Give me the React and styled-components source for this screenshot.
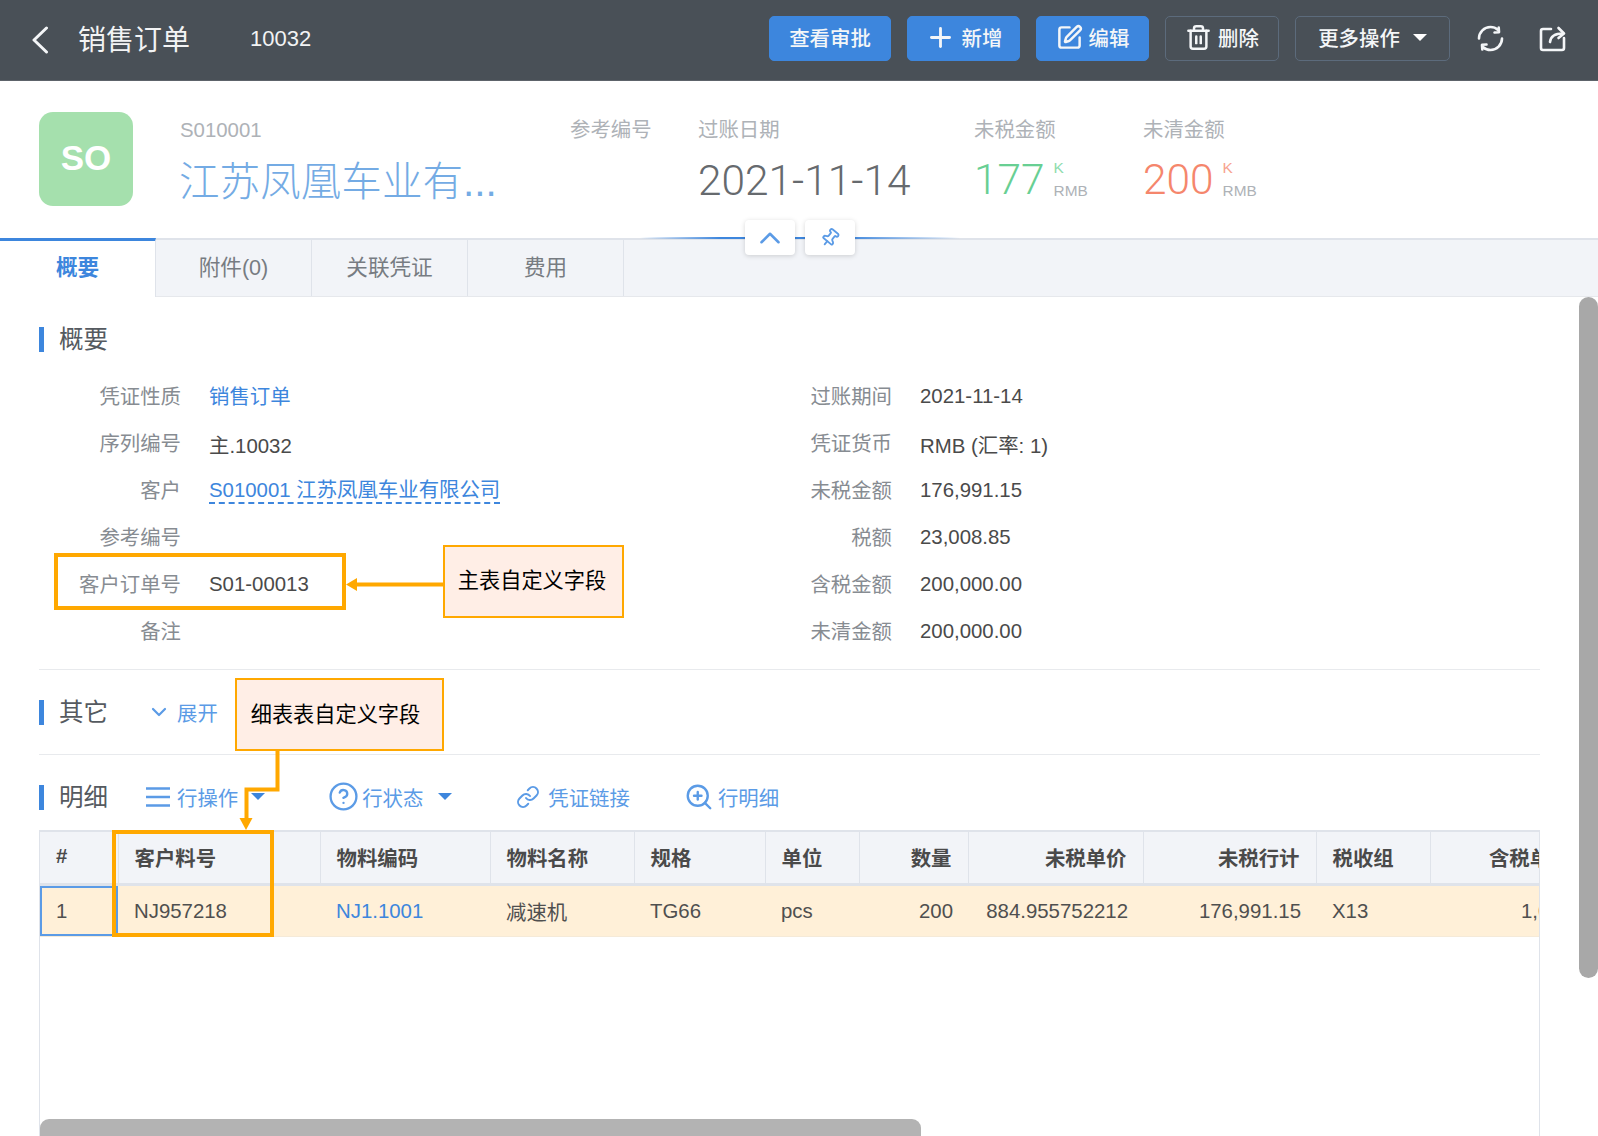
import React from "react";
import styled, { createGlobalStyle } from "styled-components";
import { ChevronUp, ChevronDown, Plus, SquarePen, Trash2, Pin, CircleHelp, Link, ZoomIn } from "lucide-react";

const Global = createGlobalStyle`
  html, body { margin: 0; padding: 0; background: #fff; overflow: hidden; }
  * { box-sizing: border-box; }
  body { font-family: "Liberation Sans", "Noto Sans CJK SC", sans-serif; }
`;

const Page = styled.div`
  position: relative;
  width: 1598px;
  height: 1136px;
  overflow: hidden;
  display: flex;
  flex-direction: column;
`;

/* ---------- top bar ---------- */
const TopBar = styled.header`
  flex: none;
  height: 81px;
  background: #495057;
  border-bottom: 1px solid #5d636a;
  display: flex;
  align-items: center;
  padding: 0 32px 4px 31px;
  color: #fff;
`;
const BackBtn = styled.span`
  display: flex;
  width: 47px;
  margin-top: 4px;
  color: #f4f6f8;
`;
const PageTitle = styled.span`
  font-size: 28px;
  width: 172px;
  color: #f2f3f4;
`;
const DocNo = styled.span`
  font-size: 22px;
  color: #f2f3f4;
  margin-top: 2px;
`;
const Actions = styled.div`
  margin-left: auto;
  display: flex;
  align-items: center;
  gap: 16px;
`;
const ActionBtn = styled.button`
  height: 45px;
  width: ${(p) => p.$w}px;
  display: flex;
  align-items: center;
  justify-content: center;
  gap: 6px;
  padding: 0 0 2px;
  font: inherit;
  font-size: 20.4px;
  font-weight: 500;
  color: #f4f6f8;
  border-radius: 5px;
  background: ${(p) => (p.$primary ? "#3d86dd" : "transparent")};
  border: 1.5px solid ${(p) => (p.$primary ? "#3d86dd" : "#5c6b7c")};
`;
const Caret = styled.span`
  width: 0;
  height: 0;
  margin-left: ${(p) => p.$ml || 8}px;
  border-left: ${(p) => p.$size || 7}px solid transparent;
  border-right: ${(p) => p.$size || 7}px solid transparent;
  border-top: ${(p) => p.$size || 7}px solid ${(p) => p.$color || "#fff"};
`;
const IconBtns = styled.div`
  display: flex;
  align-items: center;
  gap: 33px;
  margin-left: 26px;
  color: #f4f6f8;
`;

/* ---------- summary ---------- */
const Summary = styled.section`
  flex: none;
  height: 157px;
  padding: 31px 0 0 39px;
  display: flex;
  align-items: flex-start;
`;
const Avatar = styled.div`
  width: 94px;
  height: 94px;
  margin-right: 47px;
  border-radius: 14px;
  background: #a5e0ad;
  color: #fff;
  font-size: 35px;
  font-weight: 700;
  display: flex;
  align-items: center;
  justify-content: center;
  padding-bottom: 2px;
`;
const Stat = styled.div`
  width: ${(p) => p.$w}px;
  flex: none;
`;
const StatLabel = styled.div`
  height: 36px;
  line-height: 36px;
  font-size: 20.4px;
  color: #aeb2b7;
`;
const StatRow = styled.div`
  height: 66px;
  display: flex;
  align-items: center;
  white-space: nowrap;
  padding-bottom: ${(p) => p.$pb || 2}px;
`;
const CompanyName = styled.span`
  font-size: 40.6px;
  font-weight: 300;
  color: #74abe4;
  margin-left: -1px;
`;
const StatNum = styled.span`
  font-family: Roboto, "Liberation Sans", sans-serif;
  font-weight: 300;
  font-size: 42.4px;
  color: ${(p) => p.$color};
`;
const UnitCol = styled.span`
  display: flex;
  flex-direction: column;
  margin-left: 9px;
  font-size: 15.4px;
  line-height: 23px;
  color: #aeb2b7;
`;
const UnitK = styled.span`
  color: ${(p) => p.$color};
`;

/* ---------- tabs ---------- */
const TabBar = styled.nav`
  position: relative;
  flex: none;
  height: 59px;
  background: #f2f4f8;
  border-top: 2px solid #dfe3ea;
  border-bottom: 1px solid #e6e8ec;
  display: flex;
`;
const Tab = styled.div`
  width: 156px;
  margin-top: ${(p) => (p.$active ? "-2px" : "0")};
  padding-bottom: ${(p) => (p.$active ? "8px" : "5px")};
  display: flex;
  align-items: center;
  justify-content: center;
  font-size: 21.6px;
  font-weight: ${(p) => (p.$active ? 700 : 400)};
  color: ${(p) => (p.$active ? "#3d86dd" : "#777c82")};
  background: ${(p) => (p.$active ? "#fff" : "transparent")};
  border-top: ${(p) => (p.$active ? "3px solid #3d86dd" : "0")};
  border-right: 1px solid #dfe3ea;
  margin-bottom: ${(p) => (p.$active ? "-1px" : "0")};
`;
const BlueLine = styled.div`
  position: absolute;
  left: 640px;
  top: -3px;
  width: 320px;
  height: 2px;
  background: linear-gradient(90deg, rgba(61,134,221,0) 0%, #3d86dd 25%, #3d86dd 65%, rgba(61,134,221,0) 100%);
`;
const FloatBtn = styled.button`
  position: absolute;
  top: -20px;
  left: ${(p) => p.$left}px;
  width: 50px;
  height: 35px;
  padding: 0;
  border: 0;
  border-radius: 4px;
  background: #fff;
  color: #5b9be6;
  box-shadow: 0 1px 5px rgba(0,0,0,.16);
  display: flex;
  align-items: center;
  justify-content: center;
`;

/* ---------- body ---------- */
const Body = styled.main`
  flex: 1;
  min-height: 0;
  padding: 30px 58px 0 39px;
  display: flex;
  flex-direction: column;
`;
const Head = styled.div`
  flex: none;
  height: 25px;
  display: flex;
  align-items: center;
  border-left: 5px solid #3d86dd;
  padding-left: 15px;
`;
const HeadTitle = styled.span`
  font-size: 24.5px;
  color: #555a60;
  margin: -4px ${(p) => p.$mr || 0}px 0 0;
`;
const Tool = styled.span`
  display: inline-flex;
  align-items: center;
  color: #5b9be6;
  font-size: 20.4px;
  white-space: nowrap;
  margin-top: -2px;
  margin-left: ${(p) => p.$ml || 0}px;
  svg { margin-right: ${(p) => p.$gap ?? 7}px; }
`;
const FormGrid = styled.div`
  display: grid;
  grid-template-columns: 711px 1fr;
  grid-auto-flow: column;
  grid-template-rows: repeat(6, 47px);
  margin-top: 21px;
  padding-bottom: 14px;
  border-bottom: 1px solid #e8eaed;
`;
const Field = styled.div`
  display: flex;
  align-items: center;
  font-size: 20.4px;
`;
const Label = styled.span`
  width: 142px;
  margin: -3px 28px 0 0;
  text-align: right;
  color: #878c92;
`;
const Value = styled.span`
  color: #4a4a4a;
`;
const LinkValue = styled.span`
  color: #3d86dd;
  border-bottom: ${(p) => (p.$dashed ? "2px dashed #3d86dd" : "0")};
  line-height: 24px;
`;
const OtherWrap = styled.div`
  padding: 30px 0 29px;
  border-bottom: 1px solid #e8eaed;
`;
const DetailWrap = styled.div`
  padding-top: 30px;
`;

/* ---------- table ---------- */
const TableWrap = styled.div`
  flex: 1;
  min-height: 0;
  margin-top: 20px;
  border: 1px solid #dfe3ea;
  border-bottom: 0;
  overflow: hidden;
`;
const Table = styled.table`
  table-layout: fixed;
  border-collapse: collapse;
  width: 1547px;
  font-size: 20.4px;
`;
const Th = styled.th`
  height: 53px;
  padding: 0 16px 2px;
  font-weight: 700;
  color: #4a4a4a;
  background: #f2f4f8;
  text-align: ${(p) => (p.$right ? "right" : "left")};
  white-space: nowrap;
  border-right: 1px solid #dfe3ea;
  border-top: 1px solid #dfe3ea;
  border-bottom: 3px solid #dfe3ea;
`;
const Td = styled.td`
  height: 52px;
  padding: 0 ${(p) => (p.$right ? 15 : 16)}px 0 16px;
  background: #fff0d8;
  color: ${(p) => (p.$link ? "#3d86dd" : "#4f4f4f")};
  text-align: ${(p) => (p.$right ? "right" : "left")};
  white-space: nowrap;
  border-bottom: 1px solid #f5ead8;
  box-shadow: ${(p) => (p.$selected ? "inset 0 0 0 2px #5b9be6" : "none")};
`;

/* ---------- scrollbars ---------- */
const ScrollV = styled.div`
  position: absolute;
  left: 1579px;
  top: 297px;
  width: 19px;
  height: 681px;
  border-radius: 10px;
  background: #a8a8a8;
`;
const ScrollH = styled.div`
  position: absolute;
  left: 40px;
  top: 1119px;
  width: 881px;
  height: 17px;
  border-radius: 9px 9px 0 0;
  background: #b3b3b3;
`;

/* ---------- annotations ---------- */
const Mark = styled.div`
  position: absolute;
  left: ${(p) => p.$x}px;
  top: ${(p) => p.$y}px;
  width: ${(p) => p.$w}px;
  height: ${(p) => p.$h}px;
  border: 4px solid #ffa800;
`;
const Callout = styled.div`
  position: absolute;
  left: ${(p) => p.$x}px;
  top: ${(p) => p.$y}px;
  width: ${(p) => p.$w}px;
  height: ${(p) => p.$h}px;
  border: 2px solid #ffa800;
  background: #ffeee6;
  color: #000;
  font-size: 21.2px;
  display: flex;
  align-items: center;
  justify-content: center;
  padding-bottom: ${(p) => p.$pb || 0}px;
  padding-right: ${(p) => p.$pr || 0}px;
`;
const ArrowLayer = styled.svg`
  position: absolute;
  left: 0;
  top: 0;
  pointer-events: none;
`;

const cols = [78, 202, 170, 144, 131, 94, 109, 175, 173, 114, 157];
const headers = [
  ["#"], ["客户料号"], ["物料编码"], ["物料名称"], ["规格"], ["单位"],
  ["数量", 1], ["未税单价", 1], ["未税行计", 1], ["税收组"], ["含税单价", 1],
];

const BackIcon = () => (
  <svg width="18" height="28" viewBox="0 0 18 28" fill="none" stroke="currentColor" strokeWidth="3" strokeLinecap="round" strokeLinejoin="round">
    <path d="M15.500 2L3 14l12.500 12" />
  </svg>
);
const RefreshIcon = () => (
  <svg width="29" height="29" viewBox="0 0 29 29" fill="none" stroke="currentColor" strokeWidth="2.6" strokeLinecap="round" strokeLinejoin="round">
    <path d="M3 14.500C3 8.200 8.200 3 14.500 3c2.800 0 5.400 1 7.300 2.800" />
    <path d="M26 14.500c0 6.300-5.200 11.500-11.500 11.500-2.800 0-5.400-1-7.300-2.800" />
    <path d="M18.500 8.500l4.500-.3-.3-4.700" />
    <path d="M10.500 20.500l-4.500.3.3 4.700" />
  </svg>
);
const ShareIcon = () => (
  <svg width="28" height="28" viewBox="0 0 28 28" fill="none" stroke="currentColor" strokeWidth="2.6" strokeLinecap="round" strokeLinejoin="round">
    <path d="M13 5H5a2 2 0 0 0-2 2v17a2 2 0 0 0 2 2h19a2 2 0 0 0 2-2v-10" />
    <path d="M12 18c.5-5 4-8.500 13-8.500" />
    <path d="M20.500 4l5.500 5.500-5.500 4.500" />
  </svg>
);
const MenuIcon = () => (
  <svg width="24" height="22" viewBox="0 0 24 22" fill="none" stroke="currentColor" strokeWidth="2.6">
    <path d="M0 2.500h24M0 11h24M0 19.500h24" />
  </svg>
);

export default function App() {
  return (
    <Page>
      <Global />
      <TopBar>
        <BackBtn><BackIcon /></BackBtn>
        <PageTitle>销售订单</PageTitle>
        <DocNo>10032</DocNo>
        <Actions>
          <ActionBtn $primary $w={122}>查看审批</ActionBtn>
          <ActionBtn $primary $w={113}><Plus size={31} strokeWidth={2.2} />新增</ActionBtn>
          <ActionBtn $primary $w={113}><SquarePen size={27} strokeWidth={2.2} />编辑</ActionBtn>
          <ActionBtn $w={114}><Trash2 size={27} strokeWidth={2.2} />删除</ActionBtn>
          <ActionBtn $w={155}>更多操作<Caret $ml={7} /></ActionBtn>
        </Actions>
        <IconBtns>
          <RefreshIcon />
          <ShareIcon />
        </IconBtns>
      </TopBar>

      <Summary>
        <Avatar>SO</Avatar>
        <Stat $w={390}>
          <StatLabel>S010001</StatLabel>
          <StatRow $pb={6}><CompanyName>江苏凤凰车业有...</CompanyName></StatRow>
        </Stat>
        <Stat $w={128}><StatLabel>参考编号</StatLabel></Stat>
        <Stat $w={276}>
          <StatLabel>过账日期</StatLabel>
          <StatRow><StatNum $color="#666a6e">2021-11-14</StatNum></StatRow>
        </Stat>
        <Stat $w={169}>
          <StatLabel>未税金额</StatLabel>
          <StatRow $pb={4}>
            <StatNum $color="#68cf93">177</StatNum>
            <UnitCol><UnitK $color="#8fdcae">K</UnitK><span>RMB</span></UnitCol>
          </StatRow>
        </Stat>
        <Stat $w={169}>
          <StatLabel>未清金额</StatLabel>
          <StatRow $pb={4}>
            <StatNum $color="#f5866c">200</StatNum>
            <UnitCol><UnitK $color="#f7a390">K</UnitK><span>RMB</span></UnitCol>
          </StatRow>
        </Stat>
      </Summary>

      <TabBar>
        <Tab $active>概要</Tab>
        <Tab>附件(0)</Tab>
        <Tab>关联凭证</Tab>
        <Tab>费用</Tab>
        <BlueLine />
        <FloatBtn $left={745}><ChevronUp size={34} strokeWidth={1.8} /></FloatBtn>
        <FloatBtn $left={805}><Pin size={20} strokeWidth={2.2} style={{ transform: "rotate(40deg)" }} /></FloatBtn>
      </TabBar>

      <Body>
        <Head><HeadTitle>概要</HeadTitle></Head>
        <FormGrid>
          <Field><Label>凭证性质</Label><LinkValue>销售订单</LinkValue></Field>
          <Field><Label>序列编号</Label><Value>主.10032</Value></Field>
          <Field><Label>客户</Label><LinkValue $dashed>S010001 江苏凤凰车业有限公司</LinkValue></Field>
          <Field><Label>参考编号</Label></Field>
          <Field><Label>客户订单号</Label><Value>S01-00013</Value></Field>
          <Field><Label>备注</Label></Field>
          <Field><Label>过账期间</Label><Value>2021-11-14</Value></Field>
          <Field><Label>凭证货币</Label><Value>RMB (汇率: 1)</Value></Field>
          <Field><Label>未税金额</Label><Value>176,991.15</Value></Field>
          <Field><Label>税额</Label><Value>23,008.85</Value></Field>
          <Field><Label>含税金额</Label><Value>200,000.00</Value></Field>
          <Field><Label>未清金额</Label><Value>200,000.00</Value></Field>
        </FormGrid>

        <OtherWrap>
          <Head>
            <HeadTitle $mr={39}>其它</HeadTitle>
            <Tool $gap={6}><ChevronDown size={24} strokeWidth={2.2} />展开</Tool>
          </Head>
        </OtherWrap>

        <DetailWrap>
          <Head>
            <HeadTitle $mr={38}>明细</HeadTitle>
            <Tool $gap={7}><MenuIcon />行操作<Caret $ml={13} $size={7} $color="#3d86dd" /></Tool>
            <Tool $gap={3} $ml={63}><CircleHelp size={31} strokeWidth={1.8} />行状态<Caret $ml={15} $size={7} $color="#3d86dd" /></Tool>
            <Tool $gap={8} $ml={64}><Link size={24} strokeWidth={2} />凭证链接</Tool>
            <Tool $gap={4} $ml={54}><ZoomIn size={30} strokeWidth={1.9} />行明细</Tool>
          </Head>
        </DetailWrap>

        <TableWrap>
          <Table>
            <colgroup>
              {cols.map((w, i) => <col key={i} style={{ width: w }} />)}
            </colgroup>
            <thead>
              <tr>
                {headers.map(([t, r], i) => <Th key={i} $right={r}>{t}</Th>)}
              </tr>
            </thead>
            <tbody>
              <tr>
                <Td $selected>1</Td>
                <Td>NJ957218</Td>
                <Td $link>NJ1.1001</Td>
                <Td>减速机</Td>
                <Td>TG66</Td>
                <Td>pcs</Td>
                <Td $right>200</Td>
                <Td $right>884.955752212</Td>
                <Td $right>176,991.15</Td>
                <Td>X13</Td>
                <Td $right>1,000</Td>
              </tr>
            </tbody>
          </Table>
        </TableWrap>
      </Body>

      <ScrollV />
      <ScrollH />

      <Mark $x={54} $y={553} $w={292} $h={57} />
      <Callout $x={443} $y={545} $w={181} $h={73} $pb={6} $pr={3}>主表自定义字段</Callout>
      <Mark $x={112} $y={830} $w={162} $h={107} />
      <Callout $x={235} $y={678} $w={209} $h={73} $pb={4} $pr={8}>细表表自定义字段</Callout>
      <ArrowLayer width="1598" height="1136" viewBox="0 0 1598 1136">
        <path d="M443 584.500H352" stroke="#ffa800" strokeWidth="4" fill="none" />
        <path d="M346 584.500l11-6.500v13z" fill="#ffa800" />
        <path d="M277.500 751V789.500H246.500V820" stroke="#ffa800" strokeWidth="4" fill="none" />
        <path d="M246 830l-6.500-12h13z" fill="#ffa800" />
      </ArrowLayer>
    </Page>
  );
}
